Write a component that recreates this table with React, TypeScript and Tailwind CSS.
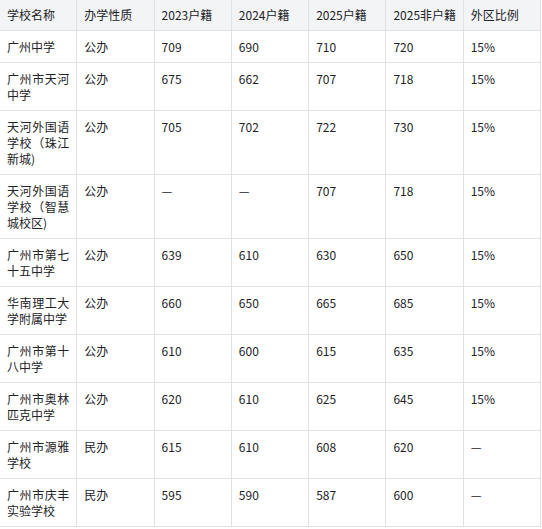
const headers = ['学校名称', '办学性质', '2023户籍', '2024户籍', '2025户籍', '2025非户籍', '外区比例']

const rows = [
  ['广州中学', '公办', '709', '690', '710', '720', '15%'],
  ['广州市天河中学', '公办', '675', '662', '707', '718', '15%'],
  ['天河外国语学校（珠江新城)', '公办', '705', '702', '722', '730', '15%'],
  ['天河外国语学校（智慧城校区)', '公办', '—', '—', '707', '718', '15%'],
  ['广州市第七十五中学', '公办', '639', '610', '630', '650', '15%'],
  ['华南理工大学附属中学', '公办', '660', '650', '665', '685', '15%'],
  ['广州市第十八中学', '公办', '610', '600', '615', '635', '15%'],
  ['广州市奥林匹克中学', '公办', '620', '610', '625', '645', '15%'],
  ['广州市源雅学校', '民办', '615', '610', '608', '620', '—'],
  ['广州市庆丰实验学校', '民办', '595', '590', '587', '600', '—'],
]

export default function App() {
  return (
    <div className="w-[542px] h-[529px] overflow-hidden bg-white">
      <table
        className="table-fixed border-collapse w-[542px] -ml-px -mt-[2px] text-[12px] leading-[16px] text-[#222326]"
        style={{ fontFamily: '"Noto Sans CJK SC", "Noto Sans", sans-serif' }}
      >
        <thead>
          <tr className="bg-[#f3f4f6]">
            {headers.map((h) => (
              <th
                key={h}
                className="border border-[#dfe1e5] pl-[7px] pr-[5px] pt-[8px] pb-[7px] text-left font-normal align-top whitespace-nowrap"
              >
                {h}
              </th>
            ))}
          </tr>
        </thead>
        <tbody>
          {rows.map((r, i) => (
            <tr key={i}>
              {r.map((c, j) => (
                <td
                  key={j}
                  className={`border border-[#dfe1e5] pl-[7px] pr-[7px] pt-[8px] pb-[7px] align-top ${j === 0 ? 'text-justify [text-justify:inter-character]' : 'text-left'}`}
                >
                  {c}
                </td>
              ))}
            </tr>
          ))}
        </tbody>
      </table>
    </div>
  )
}
